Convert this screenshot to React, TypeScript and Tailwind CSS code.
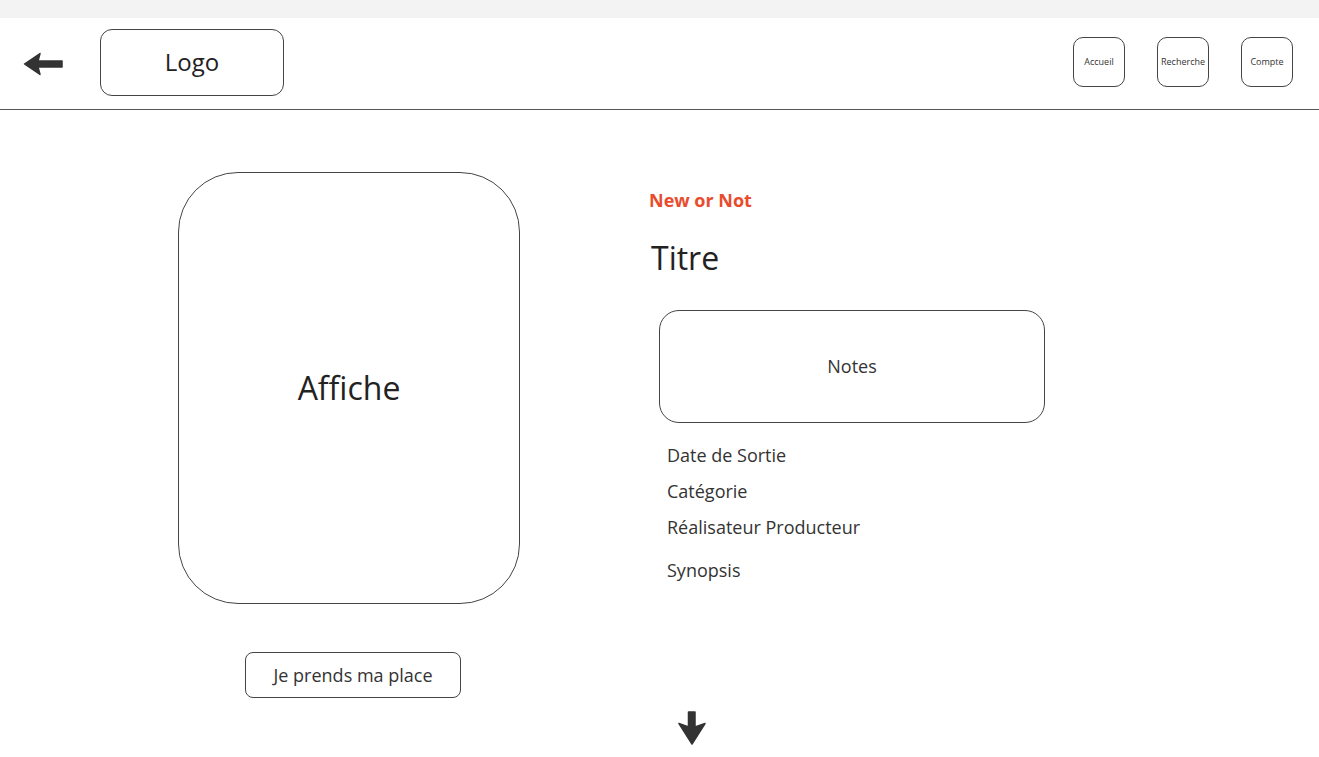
import React from 'react';

const navItems = ['Accueil', 'Recherche', 'Compte'];

const details = ['Date de Sortie', 'Catégorie', 'Réalisateur Producteur'];

export default function App() {
  return (
    <div className="min-h-screen w-full bg-white text-[#222]" style={{ fontFamily: '"Open Sans", "Noto Sans", sans-serif' }}>
      <div className="h-[18px] bg-[#f3f3f3]" />

      <header className="h-[92px] pb-[3px] border-b border-[#555] flex items-center">
        <div className="flex items-center pl-[23px]">
          <svg width="40" height="24" viewBox="0 0 40 24" className="mt-[3px]">
            <path d="M1.5 12 L17 1.5 L15 9 L39 9 L39 15 L15 15 L17 22.5 Z" fill="#333" stroke="#333" strokeWidth="1.5" strokeLinejoin="round" />
          </svg>
          <div className="ml-[37px] w-[184px] h-[67px] rounded-[12px] border border-[#444] flex items-center justify-center text-[24px]">
            Logo
          </div>
        </div>
        <nav className="ml-auto mr-[26px] flex gap-[32px]">
          {navItems.map(item => (
            <div key={item} className="w-[52px] h-[50px] rounded-[10px] border border-[#444] flex items-center justify-center text-[9px] text-[#333]">
              {item}
            </div>
          ))}
        </nav>
      </header>

      <main className="flex">
        <div className="pl-[178px] pt-[62px] flex flex-col items-center">
          <div className="w-[342px] h-[432px] rounded-[60px] border border-[#444] flex items-center justify-center text-[32px]">
            Affiche
          </div>
          <div className="mt-[48px] ml-[8px] w-[216px] h-[46px] rounded-[8px] border border-[#444] flex items-center justify-center text-[18px] text-[#333]">
            Je prends ma place
          </div>
        </div>

        <div className="pl-[129px] pt-[78px] flex flex-col">
          <div className="text-[18px] leading-[24px] font-bold text-[#e84c2d]">New or Not</div>
          <div className="mt-[24px] ml-[2px] text-[32px] leading-[44px]">Titre</div>
          <div className="mt-[30px] ml-[10px] w-[386px] h-[113px] rounded-[20px] border border-[#444] flex items-center justify-center text-[18px] text-[#333]">
            Notes
          </div>
          <div className="ml-[18px] mt-[20px] flex flex-col gap-[11px] text-[18px] leading-[25px] text-[#333]">
            {details.map(d => (
              <div key={d}>{d}</div>
            ))}
            <div className="mt-[7px]">Synopsis</div>
          </div>
        </div>
      </main>

      <div className="pl-[678px] pt-[13px]">
        <svg width="28" height="34" viewBox="0 0 28 34">
          <path d="M10.5 1 L17 1 L17 16 L27 12.5 L14 33 L1 12.5 L10.5 16 Z" fill="#333" stroke="#333" strokeWidth="1.5" strokeLinejoin="round" />
        </svg>
      </div>
    </div>
  );
}
